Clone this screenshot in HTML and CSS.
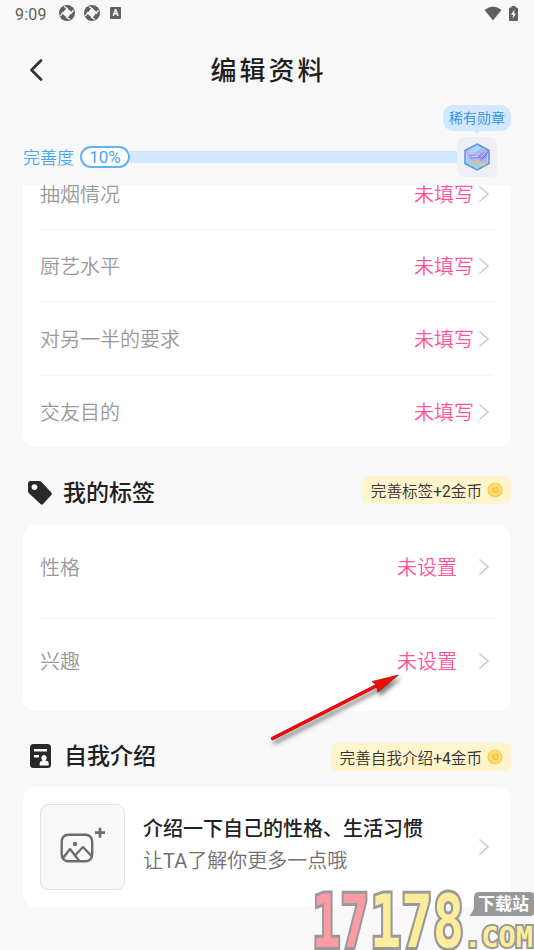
FILE: index.html
```
<!DOCTYPE html>
<html lang="zh-CN">
<head>
<meta charset="utf-8">
<title>编辑资料</title>
<link rel="stylesheet" href="styles.css">
</head>
<body>
<svg class="defs" aria-hidden="true">
  <defs>
    <symbol id="chevron" viewBox="0 0 12 18"><path d="M1.5 1.5 10 9 1.5 16.5" fill="none" stroke="#c9c9c9" stroke-width="1.5"/></symbol>
    <symbol id="shutter" viewBox="0 0 16 16">
      <circle cx="8" cy="8" r="8" fill="#606060"/>
      <path d="M7.500 3 13 7 8.500 13 3 8.500Z" fill="#f8f8f8"/>
      <path d="M5 1.500 9 4M14.500 5 12 9M11 14.500 7 12M1.500 11 4 7" fill="none" stroke="#f8f8f8" stroke-width="1.300"/>
    </symbol>
    <symbol id="coin" viewBox="0 0 16 16">
      <circle cx="8" cy="8" r="7.6" fill="#f7cc58"/>
      <circle cx="8.2" cy="7.6" r="6.2" fill="#ffdf72"/>
      <path d="M5 5.500 7 6 10.500 4 12 8 9.500 11.500 5.500 10Z" fill="#f3c04d"/>
      <path d="M7 6.400 9.800 5.900 10 8.800 8 10.200Z" fill="#ffdd6d"/>
    </symbol>
  </defs>
</svg>
<div class="screen">
  <div class="status">
    <span class="clock">9:09</span>
    <svg class="shutter"><use href="#shutter"/></svg>
    <svg class="shutter"><use href="#shutter"/></svg>
    <span class="ime">A</span>
    <svg class="wifi" viewBox="0 0 18 15"><path d="M.5 4Q9-3 17.500 4L9 14.500Z" fill="#606060"/></svg>
    <svg class="battery" viewBox="0 0 9 15"><path d="M2.500 1.500V0h4v1.500H8q1 0 1 1V14q0 1-1 1H1q-1 0-1-1V2.500q0-1 1-1Z" fill="#606060"/><path d="M5.500 3.500 2 8.800h2.100L3.600 12.500 7 7.600H5Z" fill="#f8f8f8"/></svg>
  </div>
  <header class="nav">
    <svg class="back" viewBox="0 0 14 22"><path d="M12 1.500 2.500 11 12 20.500" fill="none" stroke="#333" stroke-width="2.700" stroke-linecap="round" stroke-linejoin="round"/></svg>
    <h1>编辑资料</h1>
  </header>
  <div class="progress">
    <span class="progress-label">完善度</span>
    <span class="percent">10%</span>
    <span class="track"></span>
    <div class="medal">
      <svg viewBox="0 0 28 28">
        <path d="M14 1 26 7.500V20.500L14 27 2 20.500V7.500Z" fill="#a8d4f8" stroke="#5a94dc" stroke-width="1.500"/>
        <path d="M14 3 24 8.500V19.500L14 25 4 19.500V8.500Z" fill="#b3b2f3"/>
        <path d="M4 14 11 20 18 19 22 21 14 25 4 19.500Z" fill="#9cd2f0"/>
        <path d="M5 8.500 14 3 18 5 12 9 4 12Z" fill="#a9d8f5"/>
        <path d="M6 11.500 15 13 26 6 23.500 14 17 18 18 15 8 15.500Z" fill="#8c86e4"/>
        <path d="M8 13.500h7M18 14l6-6" stroke="#c3e2ff" stroke-width="1" fill="none"/>
        <path d="M10 21v-2l2 1 2-2 2 3M18 21h4M21 19v4" stroke="#ecc46c" stroke-width="1.800" fill="none"/>
        <circle cx="5" cy="10" r="2" fill="#ee9fe4"/>
      </svg>
      <span class="bubble">稀有勋章</span>
    </div>
  </div>
  <main class="content">
    <section class="card basics">
      <div class="row"><span>抽烟情况</span><b>未填写</b><svg class="chevron"><use href="#chevron"/></svg></div>
      <div class="row"><span>厨艺水平</span><b>未填写</b><svg class="chevron"><use href="#chevron"/></svg></div>
      <div class="row"><span>对另一半的要求</span><b>未填写</b><svg class="chevron"><use href="#chevron"/></svg></div>
      <div class="row"><span>交友目的</span><b>未填写</b><svg class="chevron"><use href="#chevron"/></svg></div>
    </section>
    <div class="heading tags-heading">
      <svg class="heading-icon" viewBox="0 0 24 24"><path fill-rule="evenodd" d="M2.500 0H11q1.500 0 2.500 1L23.300 11.500q1.200 1.300 0 2.600l-8.200 8.900q-1.300 1.300-2.600 0L.9 12.200Q0 11.200 0 10V2.500Q0 0 2.500 0ZM6.500 3.200a2.900 2.900 0 1 0 0 5.800 2.900 2.900 0 0 0 0-5.800Z" fill="#292929"/></svg>
      <h2>我的标签</h2>
      <span class="reward"><span>完善标签<i>+2</i>金币</span><svg class="coin"><use href="#coin"/></svg></span>
    </div>
    <section class="card tags">
      <div class="row"><span>性格</span><b>未设置</b><svg class="chevron"><use href="#chevron"/></svg></div>
      <div class="row"><span>兴趣</span><b>未设置</b><svg class="chevron"><use href="#chevron"/></svg></div>
    </section>
    <div class="heading intro-heading">
      <svg class="heading-icon" viewBox="0 0 24 24"><rect x="2" width="21" height="24" rx="3.500" fill="#292929"/><path d="M6 5h13v2.500H6ZM6 11h5v2.500H6Z" fill="#fff"/><path d="M16 11a2.800 2.800 0 0 1 1.700 4.900v.8q3 .4 3 2.400V21.500h-9v-2.400q0-2 2.600-2.400v-.8A2.800 2.800 0 0 1 16 11Z" fill="#fff"/></svg>
      <h2>自我介绍</h2>
      <span class="reward"><span>完善自我介绍<i>+4</i>金币</span><svg class="coin"><use href="#coin"/></svg></span>
    </div>
    <section class="card intro">
      <div class="upload"><svg viewBox="0 0 46 36" fill="none" stroke="#6c6c6c" stroke-width="2.400"><rect x="1.700" y="7.700" width="30.500" height="26.500" rx="6.500"/><path d="M3 31 10 22 19 33.500M15 28.500 23 20 31.500 29" stroke-linejoin="round"/><circle cx="15" cy="17" r="2.200" fill="#6c6c6c" stroke="none"/><path d="M40 .7v10M35 5.700h10" stroke-width="2.700"/></svg></div>
      <div class="intro-copy"><strong>介绍一下自己的性格、生活习惯</strong><span>让<i>TA</i>了解你更多一点哦</span></div>
      <svg class="chevron"><use href="#chevron"/></svg>
    </section>
  </main>
  <svg class="arrow" viewBox="0 0 140 80"><path d="M5.500 69.500 111 16" fill="none" stroke="#7a1515" stroke-width="3.400" stroke-linecap="round"/><path d="M5.500 69.500 114 14.500" fill="none" stroke="#fb0606" stroke-width="2.700" stroke-linecap="round"/><path d="M131.500 6 105 12.500 109.500 16 111 23Z" fill="#fb0606" stroke="#81201a" stroke-width=".7"/></svg>
  <svg class="watermark" viewBox="0 0 226 62">
    <g class="numbers">
      <text class="pink" x="3" y="57.500" textLength="57" lengthAdjust="spacingAndGlyphs">17</text>
      <text class="yellow" x="61" y="57.500" textLength="94" lengthAdjust="spacingAndGlyphs">178</text>
    </g>
    <text class="domain" x="155" y="58" textLength="69" lengthAdjust="spacingAndGlyphs">.COM</text>
    <path d="M170 3h51q5 0 5 5v13q0 6-5 6h-61q5-5 5-10V8q0-5 5-5Z" fill="#999"/>
    <text class="station" x="169" y="21">下载站</text>
  </svg>
</div>
</body>
</html>
```

FILE: styles.css
```
* { box-sizing: border-box; }
body { margin: 0; background: #f8f8f8; font-family: Roboto, "Noto Sans CJK SC", sans-serif; font-weight: 350; }
svg { display: block; flex: none; }
i { font-style: normal; font-weight: 400; }
.defs { position: absolute; width: 0; height: 0; }
.screen { position: relative; width: 534px; height: 950px; overflow: hidden; display: flex; flex-direction: column; }

.status { height: 28px; display: flex; align-items: center; padding: 0 16px 2px 15px; color: #606060; }
.clock { font-size: 16px; font-weight: 400; letter-spacing: .2px; width: 44px; padding-top: 2px; }
.shutter { width: 16px; height: 16px; margin-right: 9px; }
.ime { width: 11px; height: 12px; margin-left: 1px; border-radius: 1px; background: #606060; color: #fff; font: bold 9px/12px Roboto, sans-serif; text-align: center; }
.wifi { width: 18px; height: 15px; margin-left: auto; margin-right: 7px; }
.battery { width: 9px; height: 15px; }

.nav { height: 84px; display: grid; grid-template-columns: 60px 1fr 60px; align-items: center; }
.back { width: 14px; height: 22px; margin-left: 29px; }
.nav h1 { margin: 0; text-align: center; color: #1e1e1e; font-size: 26px; font-weight: 500; line-height: 40px; letter-spacing: 3px; padding: 2px 0 0 3px; }

.progress { height: 73px; padding: 17px 37px 0 23px; display: flex; align-items: center; color: #4aa5f7; }
.progress-label { width: 57px; font-size: 17px; line-height: 26px; padding-top: 1px; }
.percent { width: 50px; height: 22px; border: 2px solid #62b1fb; border-radius: 12px; background: #fff; font-size: 17px; font-weight: 400; line-height: 18px; text-align: center; }
.track { flex: 1; height: 12px; background: #d2e8fe; }
.medal { position: relative; width: 40px; height: 40px; border-radius: 7px; background: #eeeff4; display: grid; place-items: center; }
.medal > svg { width: 28px; height: 28px; }
.bubble { position: absolute; right: -14px; top: -32px; width: 68px; height: 26px; border-radius: 10px; background: #d2e8fe; color: #2e8ee5; font-size: 14px; line-height: 27px; text-align: center; }
.bubble::after { content: ""; position: absolute; left: 30px; top: 25px; border: 4px solid transparent; border-top-color: #d2e8fe; border-bottom: 0; }

.content { flex: 1; overflow: hidden; padding: 0 23px; }
.card { background: #fff; border-radius: 13px; }
.basics { height: 291px; margin-top: -29px; padding: 0 17px; }
.row { height: 72.6px; display: flex; align-items: center; padding-top: 3px; border-top: 2px solid transparent; font-size: 20px; line-height: 30px; color: #999; }
.row + .row { border-top-color: #f8f8f8; }
.row b { margin-left: auto; color: #ff5598; font-weight: 350; }
.chevron { width: 12px; height: 18px; margin-right: 4px; }
.row .chevron { margin-left: 4px; margin-bottom: 2px; }
.tags { height: 186px; padding: 0 17px; }
.tags .row { height: 92px; padding: 0 0 8px; }
.tags .row + .row { padding-bottom: 5px; }
.tags .row .chevron { margin-left: 21px; }
.heading { display: flex; align-items: center; padding-left: 5px; }
.heading-icon { width: 24px; height: 24px; margin-right: 12px; }
.heading h2 { margin: 0 0 0 -1px; color: #202020; font-size: 23px; line-height: 34px; font-weight: 500; }
.tags-heading { height: 78px; padding-top: 13px; }
.tags-heading h2 { margin-top: 2px; }
.reward { margin-left: auto; height: 28px; display: flex; align-items: center; padding: 0 8px 0 9px; border-radius: 6px; background: #fff5cd; color: #333; font-size: 15.6px; white-space: nowrap; }
.tags-heading .reward { margin-bottom: 5px; }
.coin { width: 16px; height: 16px; margin-left: 5px; }
.intro-heading { height: 76px; padding-top: 15px; }
.intro-heading h2 { margin-left: 0; }
.intro-heading .heading-icon { margin-bottom: 1px; }
.intro { height: 120px; padding: 0 17px; display: flex; align-items: center; }
.upload { width: 85px; height: 86px; border: 1px solid #e3e3e3; border-radius: 8px; background: #f8f8f8; display: grid; place-items: center; }
.upload svg { width: 46px; height: 36px; margin-left: 1px; margin-top: -5px; }
.intro-copy { margin-left: 18px; padding-bottom: 5px; display: flex; flex-direction: column; gap: 2px; font-size: 20px; line-height: 30px; white-space: nowrap; }
.intro-copy strong { color: #222; font-weight: 500; }
.intro-copy span { color: #707070; }
.intro .chevron { margin-left: auto; }

.arrow { position: absolute; left: 267px; top: 669px; width: 140px; height: 80px; filter: drop-shadow(2px 4px 2px rgb(0 0 0 / 50%)); }
.watermark { position: absolute; left: 309px; top: 889px; width: 226px; height: 62px; font-family: "DejaVu Sans Mono", monospace; }
.watermark .numbers { font-size: 73px; font-weight: bold; stroke: #999; stroke-width: 6px; paint-order: stroke; }
.pink { fill: #fb9ba3; }
.yellow, .domain { fill: #ffec9b; }
.domain { font-size: 29px; font-weight: bold; stroke: #999; stroke-width: 4px; paint-order: stroke; }
.station { font: bold 17px "Noto Sans CJK SC", sans-serif; fill: #fff; }
```
